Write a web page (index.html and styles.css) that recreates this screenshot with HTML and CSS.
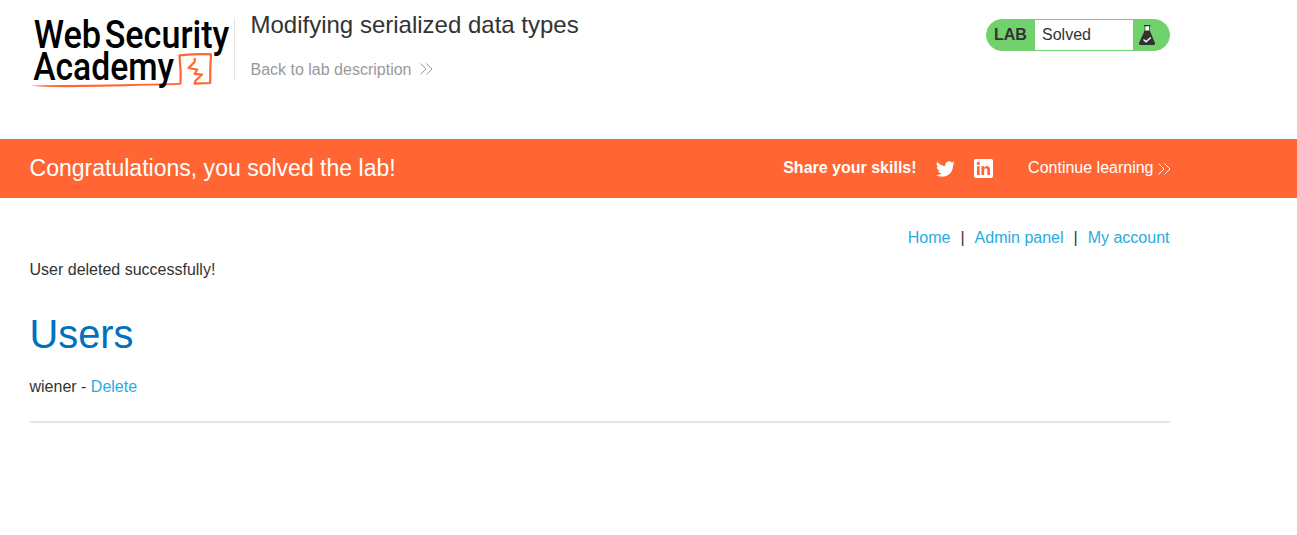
FILE: index.html
```html
<!DOCTYPE html>
<html lang="en">
<head>
<meta charset="utf-8">
<title>Modifying serialized data types</title>
<link rel="stylesheet" href="styles.css">
</head>
<body>
<header class="container lab-header">
  <svg class="logo" width="204" height="82" viewBox="30.3 12 204 82" role="img" aria-label="Web Security Academy">
    <path class="logo-line" d="M30.500 85.600 Q42 85.200 65 85 Q120 84.400 181 82.900 L181 84.800 Q120 86.400 80 87.100 Q45 87.600 30.500 85.600Z"/>
    <path class="logo-box" d="M180.800 84 L181 72 L179.800 55.300 Q195 53.900 211.300 54.300 L210.600 69 L210.500 83 L194.800 83.600 L196 80.500 L202.300 74.700 L195 73.800 L197.500 69.700 L188.800 68 L194.800 62 L195.200 58"/>
    <g class="logo-text">
      <text x="34" y="47.700" textLength="67.500" lengthAdjust="spacingAndGlyphs">Web</text>
      <text x="105" y="47.700" textLength="124.500" lengthAdjust="spacingAndGlyphs">Security</text>
      <text x="33.500" y="80.200" textLength="140.800" lengthAdjust="spacingAndGlyphs">Academy</text>
    </g>
  </svg>
  <div class="title-block">
    <h2 class="title">Modifying serialized data types</h2>
    <a class="back">Back to lab description
      <svg class="back-arrow" width="13" height="14" viewBox="0 0 13 14"><path d="M.5 1.500 6 7 .5 12.500M6.500 1.500 12 7 6.500 12.500"/></svg></a>
  </div>
  <div class="status">
    <span class="status-label">LAB</span>
    <span class="status-value">Solved</span>
    <svg class="flask" width="36" height="30" viewBox="0 0 36 30">
      <path class="flask-neck" d="M11 5h6.500v1.200H11zM11.600 6h5.300v6h-5.300z"/>
      <path class="flask-glass" d="M12.300 6.200h3.900v4.600h-3.900z"/>
      <path class="flask-body" d="M11.600 10.800h5.300L22 23Q22.300 25 21 25H7Q5.700 25 6 23z"/>
      <path class="flask-check" d="M10.500 19.500 13 21.800 17.800 17.500"/>
    </svg>
  </div>
</header>
<section class="banner">
  <div class="container banner-row">
    <h4 class="congrats">Congratulations, you solved the lab!</h4>
    <strong class="share">Share your skills!</strong>
    <svg class="twitter" width="19" height="16" viewBox="0 0 24 20"><path d="M23.950 2.600a10 10 0 0 1-2.820.77 4.960 4.960 0 0 0 2.160-2.720c-.95.550-2 .950-3.130 1.180a4.920 4.920 0 0 0-8.380 4.480C7.690 6.100 4.070 4.130 1.640 1.150a4.900 4.900 0 0 0 1.520 6.570 4.900 4.900 0 0 1-2.230-.61v.06c0 2.390 1.700 4.380 3.950 4.830a5 5 0 0 1-2.220.08 4.940 4.940 0 0 0 4.600 3.420A9.870 9.870 0 0 1 0 17.540a14 14 0 0 0 7.550 2.200c9.050 0 14-7.500 14-13.980l-.02-.64a9.940 9.940 0 0 0 2.420-2.520z"/></svg>
    <svg class="linkedin" width="19" height="19" viewBox="0 0 19 19"><rect class="in-bg" width="19" height="19" rx="2"/><path class="in-mark" d="M3 7.200h2.700V16H3zM7.400 7.200H10v1.200q.9-1.500 2.800-1.500 3.200 0 3.200 3.700V16h-2.700v-4.800q0-2-1.500-2t-1.700 2V16H7.400z"/><circle class="in-mark" cx="4.350" cy="4.400" r="1.600"/></svg>
    <a class="continue">Continue learning</a>
    <svg class="continue-arrow" width="13" height="14" viewBox="0 0 13 14"><path d="M.5 1.500 6 7 .5 12.500M6.500 1.500 12 7 6.500 12.500"/></svg>
  </div>
</section>
<main class="container page">
  <nav class="nav"><a>Home</a><span>|</span><a>Admin panel</a><span>|</span><a>My account</a></nav>
  <p class="message">User deleted successfully!</p>
  <h1 class="heading">Users</h1>
  <div class="user">wiener - <a>Delete</a></div>
  <hr class="rule">
</main>
</body>
</html>
```
FILE: styles.css
```css
* { box-sizing: border-box; }
body {
  margin: 0;
  background: #fff;
  color: #333332;
  font: 16px/20px "Liberation Sans", Arial, sans-serif;
}
h1, h2, h4, p { margin: 0; font-weight: 400; }
svg { display: block; flex: none; }
.container { width: 1199px; padding: 0 29.5px; }

.lab-header { display: flex; height: 139px; padding-top: 12px; align-items: flex-start; }
.logo { overflow: visible; }
.logo-text { font: 500 38px Roboto, sans-serif; fill: #000; }
.logo-line { fill: #f63; }
.logo-box { fill: none; stroke: #f63; stroke-width: 2.2; stroke-linejoin: round; }
.title-block {
  height: 63px;
  margin-top: 6px;
  padding-left: 16px;
  border-left: 1px solid #e5e5e5;
  white-space: nowrap;
}
.title { margin-top: -7px; font-size: 24px; line-height: 28px; }
.back { display: flex; align-items: center; gap: 9px; margin-top: 21px; color: #999; }
.back-arrow { margin-top: -2px; }
.back-arrow, .continue-arrow { fill: none; stroke: #999; stroke-width: 1; }
.status {
  display: flex;
  width: 184px;
  height: 32px;
  margin: 7px -0.5px 0 auto;
  border: 1px solid #71d26d;
  border-radius: 16px;
  overflow: hidden;
  background: #71d26d;
  line-height: 30px;
}
.status-label { width: 48px; padding-left: 7px; font-weight: 700; }
.status-value { width: 98px; padding-left: 7px; background: #fff; }
.flask-neck, .flask-body { fill: #333332; }
.flask-glass { fill: #fff; }
.flask-check { fill: none; stroke: #fff; stroke-width: 1.3; }

.banner { height: 59px; background: #f63; color: #fff; }
.banner-row { display: flex; height: 100%; align-items: center; white-space: nowrap; }
.congrats { margin: 0 auto 2px 0; font-size: 23.04px; line-height: 28px; }
.share { margin: 0 19.5px 2px 0; }
.twitter { margin-right: 19px; fill: #fff; }
.linkedin { margin-right: 35px; }
.in-bg { fill: #fff; }
.in-mark { fill: #f63; }
.continue { margin: 0 4px 2px 0; }
.continue-arrow { margin-right: -1px; stroke: #fff; }

.page a { color: #29abe2; }
.nav { display: flex; justify-content: flex-end; gap: 10px; padding-top: 30px; }
.message { margin-top: 12px; }
.heading { margin-top: 31px; font-size: 39.8px; line-height: 46px; color: #0071bc; }
.user { margin-top: 20px; }
.rule { height: 2px; margin: 24px 0 0; border: 0; background: #e5e5e5; }
```
